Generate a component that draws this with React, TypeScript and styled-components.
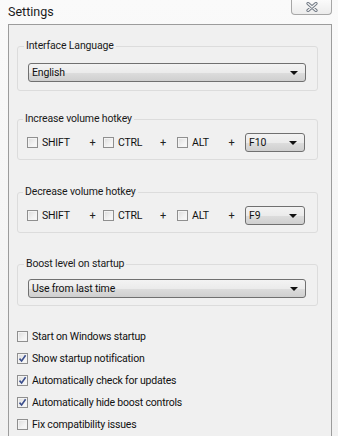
import React from 'react';
import styled, { createGlobalStyle } from 'styled-components';

const GlobalStyle = createGlobalStyle`
  html, body {
    margin: 0;
    padding: 0;
    background: #f6f6f6;
  }
  body {
    font-family: Roboto, 'Noto Sans', 'Liberation Sans', sans-serif;
    color: #000;
  }
`;

const Window = styled.div`
  width: 338px;
  height: 436px;
  overflow: hidden;
  display: flex;
  flex-direction: column;
  background: linear-gradient(180deg, #fafafa 0%, #f1f1f1 100%);
`;

const TitleBar = styled.div`
  height: 24px;
  display: flex;
  justify-content: space-between;
  align-items: flex-start;
  padding-left: 8px;
`;

const Title = styled.div`
  font-size: 12.5px;
  line-height: 14px;
  padding-top: 5px;
  color: #1a1a1a;
`;

const CloseButton = styled.div`
  width: 41px;
  height: 15px;
  margin-right: 6px;
  box-sizing: border-box;
  border: 1px solid #a7a7a7;
  border-top: none;
  border-radius: 0 0 4px 4px;
  background: linear-gradient(180deg, #fbfbfb 0%, #ececec 100%);
  display: flex;
  align-items: center;
  justify-content: center;
`;

const Panel = styled.div`
  flex: 1;
  margin: 0 6px 0 8px;
  border: 1px solid #9c9c9c;
  border-bottom: none;
  background: #f0f0f0;
  padding: 14px 13px 0 8px;
  display: flex;
  flex-direction: column;
`;

const Group = styled.fieldset<{ $gap: number; $pad?: string }>`
  margin: ${p => p.$gap}px 0 0 0;
  border: 1px solid #dcdcdc;
  border-radius: 3px;
  padding: ${p => p.$pad ?? '7px 11px 7px 9px'};
  min-width: 0;
`;

const Legend = styled.legend`
  font-size: 10.5px;
  letter-spacing: -0.15px;
  line-height: 14px;
  padding: 0 2px;
  margin-left: -4px;
  color: #1a1a1a;
`;

const Select = styled.div<{ $width?: number }>`
  height: 19px;
  box-sizing: border-box;
  width: ${p => (p.$width ? `${p.$width}px` : '100%')};
  border: 1px solid #707070;
  border-radius: 3px;
  background: linear-gradient(180deg, #f3f3f3 0%, #ebebeb 50%, #dddddd 51%, #cfcfcf 100%);
  display: flex;
  align-items: center;
  justify-content: space-between;
  padding: 0 7px 0 3px;
  font-size: 10.5px;
  letter-spacing: -0.15px;
  color: #111;
`;

const Arrow = styled.span`
  width: 0;
  height: 0;
  border-left: 4px solid transparent;
  border-right: 4px solid transparent;
  border-top: 4px solid #111;
`;

const HotkeyRow = styled.div`
  display: grid;
  grid-template-columns: 55px 21px 46px 28px 41px 27px 60px;
  align-items: center;
  height: 19px;
`;

const Plus = styled.span`
  text-align: center;
  font-size: 11px;
  color: #222;
`;

const Check = styled.label`
  display: flex;
  align-items: center;
  gap: 4px;
  font-size: 10.5px;
  letter-spacing: -0.2px;
  color: #111;
  white-space: nowrap;
`;

const Box = styled.span`
  width: 11px;
  height: 11px;
  box-sizing: border-box;
  border: 1px solid #8f8f8f;
  background: linear-gradient(135deg, #dcdcdc 0%, #f2f2f2 60%, #fbfbfb 100%);
  box-shadow: inset 0 0 0 1px #f4f4f4;
  display: flex;
  align-items: center;
  justify-content: center;
  flex: none;
`;

const Options = styled.div`
  margin-top: 19px;
  display: flex;
  flex-direction: column;
`;

const OptionRow = styled.div`
  height: 22px;
  display: flex;
  align-items: center;
`;

function CheckBox({ checked, label }: { checked?: boolean; label: string }) {
  return (
    <Check>
      <Box>
        {checked && (
          <svg width="9" height="9" viewBox="0 0 9 9">
            <path d="M1.5 4.6 L3.6 7 L7.6 1.3" fill="none" stroke="#3b4e8c" strokeWidth="1.6" />
          </svg>
        )}
      </Box>
      {label}
    </Check>
  );
}

function Hotkey({ keyName }: { keyName: string }) {
  return (
    <HotkeyRow>
      <CheckBox label="SHIFT" />
      <Plus>+</Plus>
      <CheckBox label="CTRL" />
      <Plus>+</Plus>
      <CheckBox label="ALT" />
      <Plus>+</Plus>
      <Select $width={60}>
        {keyName}
        <Arrow />
      </Select>
    </HotkeyRow>
  );
}

export default function App() {
  return (
    <Window>
      <GlobalStyle />
      <TitleBar>
        <Title>Settings</Title>
        <CloseButton>
          <svg width="12" height="10" viewBox="0 0 12 10">
            <path d="M2 1.5 L10 8.5 M10 1.5 L2 8.5" stroke="#6f7783" strokeWidth="3.2" strokeLinecap="round" />
            <path d="M2 1.5 L10 8.5 M10 1.5 L2 8.5" stroke="#f4f4f4" strokeWidth="1.3" strokeLinecap="round" />
          </svg>
        </CloseButton>
      </TitleBar>
      <Panel>
        <Group $gap={0} $pad="10px 11px 8px 10px">
          <Legend>Interface Language</Legend>
          <Select>
            English
            <Arrow />
          </Select>
        </Group>
        <Group $gap={21}>
          <Legend>Increase volume hotkey</Legend>
          <Hotkey keyName="F10" />
        </Group>
        <Group $gap={25}>
          <Legend>Decrease volume hotkey</Legend>
          <Hotkey keyName="F9" />
        </Group>
        <Group $gap={24} $pad="8px 11px 7px 10px">
          <Legend>Boost level on startup</Legend>
          <Select>
            Use from last time
            <Arrow />
          </Select>
        </Group>
        <Options>
          <OptionRow><CheckBox label="Start on Windows startup" /></OptionRow>
          <OptionRow><CheckBox checked label="Show startup notification" /></OptionRow>
          <OptionRow><CheckBox checked label="Automatically check for updates" /></OptionRow>
          <OptionRow><CheckBox checked label="Automatically hide boost controls" /></OptionRow>
          <OptionRow><CheckBox label="Fix compatibility issues" /></OptionRow>
        </Options>
      </Panel>
    </Window>
  );
}
